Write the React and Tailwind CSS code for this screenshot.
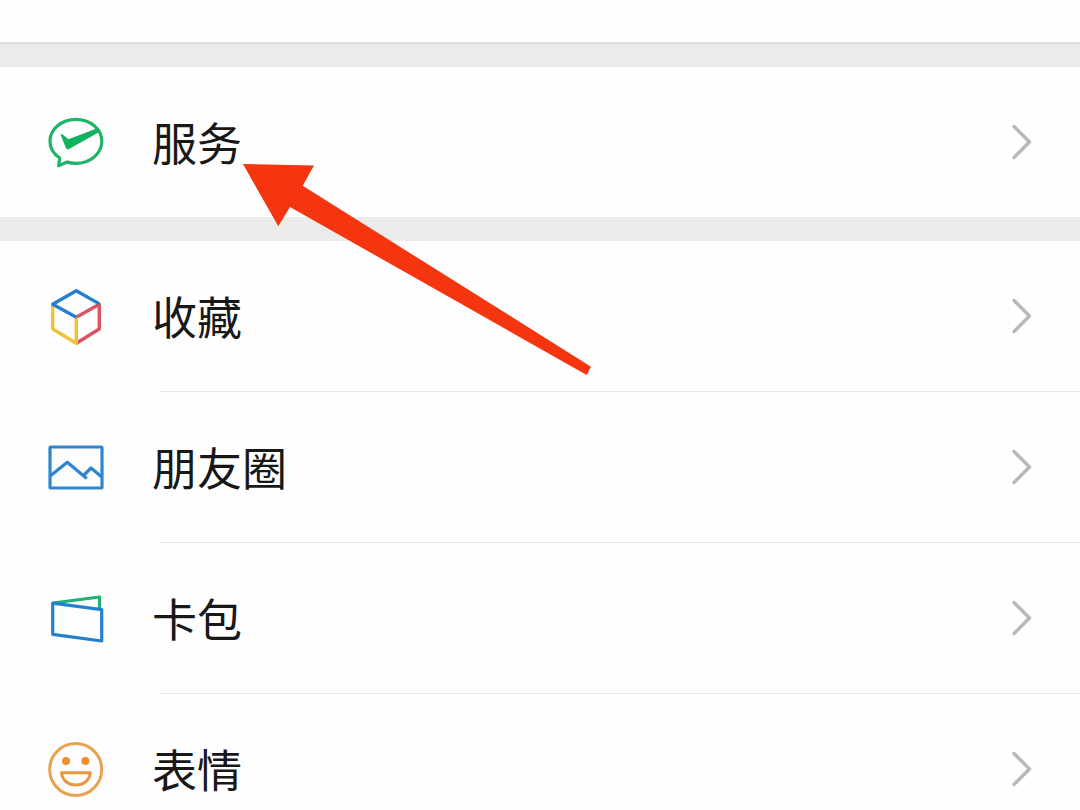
import React from "react";

function ServiceIcon() {
  return (
    <svg viewBox="0 0 56 56" className="size-14 shrink-0 overflow-visible" fill="none" aria-hidden="true">
      <path
        d="M11.800 44C5.500 40 2 34 2 27.300C2 15 13.500 5.300 27.900 5.300S53.800 15 53.800 27.300S42.300 49.300 27.900 49.300C24.800 49.300 21.900 48.900 19.200 48.100L10.600 51.700Z"
        stroke="#1fb468"
        strokeWidth="3.200"
        strokeLinejoin="round"
      />
      <path d="M12.500 20.500L14.500 20.300L19.300 24.500Q20.300 25.200 21.600 24.700L49.500 14.200L52.300 17.600L21 35Q19 36 18 34.200Z" fill="#10b260" />
    </svg>
  );
}

function FavoritesIcon() {
  return (
    <svg viewBox="0 0 56 56" className="size-14 shrink-0 overflow-visible" fill="none" strokeWidth="3.400" strokeLinejoin="round" aria-hidden="true">
      <path d="M28.300 29.200L51.300 16.300V41L28.300 55.300" stroke="#dd5260" />
      <path d="M4.700 17.500V41L28.300 55.300V29.500" stroke="#f2c137" />
      <path d="M28.300 29.200L4.700 16.300L28.300 2.700L51.300 15.900" stroke="#2480cf" />
    </svg>
  );
}

function MomentsIcon() {
  return (
    <svg viewBox="0 0 56 56" className="size-14 shrink-0 overflow-visible" fill="none" stroke="#2f86cd" strokeWidth="3.200" strokeLinejoin="round" aria-hidden="true">
      <rect x="2" y="8" width="52" height="41" rx="0.500" />
      <path d="M2.500 36.800L19.300 23.300L38.700 39.500" />
      <path d="M35.500 36.500L43 29L53.500 37.800" />
    </svg>
  );
}

function CardsIcon() {
  return (
    <svg viewBox="0 0 56 56" className="size-14 shrink-0 overflow-visible" fill="none" strokeWidth="3.200" strokeLinejoin="round" aria-hidden="true">
      <path d="M5 13L51.500 7V19" stroke="#20b072" />
      <path d="M4.700 13.200L53.700 19.700V51L4.700 44.300Z" stroke="#2480cf" />
    </svg>
  );
}

function StickersIcon() {
  return (
    <svg viewBox="0 0 56 56" className="size-14 shrink-0 overflow-visible" fill="none" aria-hidden="true">
      <circle cx="27.700" cy="28.500" r="26" stroke="#e8a252" strokeWidth="3" />
      <circle cx="18" cy="20" r="4" fill="#ee8f2e" />
      <circle cx="37.400" cy="20" r="4" fill="#ee8f2e" />
      <path d="M13.500 31.700H42.300C41.500 39.500 35.500 44 27.900 44S14.300 39.500 13.500 31.700Z" stroke="#e8963f" strokeWidth="3" strokeLinejoin="round" />
    </svg>
  );
}

function Chevron() {
  return (
    <svg viewBox="0 0 20 36" className="h-9 w-5 shrink-0" fill="none" stroke="#b8b8b8" strokeWidth="3.400" strokeLinecap="round" strokeLinejoin="round" aria-hidden="true">
      <path d="M2 2.500L17.500 18L2 33.500" />
    </svg>
  );
}

function Row({ icon, label }) {
  return (
    <a href="#" className="flex h-[150px] items-center gap-12 bg-[#fefefe] px-12">
      {icon}
      <span className="flex-1 text-[45px] leading-[60px]">{label}</span>
      <Chevron />
    </a>
  );
}

const items = [
  { label: "收藏", icon: <FavoritesIcon /> },
  { label: "朋友圈", icon: <MomentsIcon /> },
  { label: "卡包", icon: <CardsIcon /> },
  { label: "表情", icon: <StickersIcon /> },
];

export default function App() {
  return (
    <main className="relative h-screen overflow-hidden bg-[#fefefe] font-['Noto_Sans_CJK_SC',sans-serif] text-[#181818]">
      <div className="h-[42px]" />
      <div className="h-[25px] border-t-2 border-[#dfdfdf] bg-[#ebebeb]" />
      <nav>
        <Row icon={<ServiceIcon />} label="服务" />
        <div className="h-6 bg-[#ebebeb]" />
        <ul>
          {items.map((item, i) => (
            <li key={item.label}>
              {i > 0 && <div className="ml-[159px] h-px bg-[#e8e8e8]" />}
              <Row {...item} />
            </li>
          ))}
        </ul>
      </nav>
      <svg viewBox="0 0 350 212" className="pointer-events-none absolute top-[164px] left-[243px] w-[350px]" aria-hidden="true">
        <path d="M0 0L71 1.500L59.700 21.700L348 202.700L343.700 211L47 43L35.300 62.300Z" fill="#f5350f" />
      </svg>
    </main>
  );
}
